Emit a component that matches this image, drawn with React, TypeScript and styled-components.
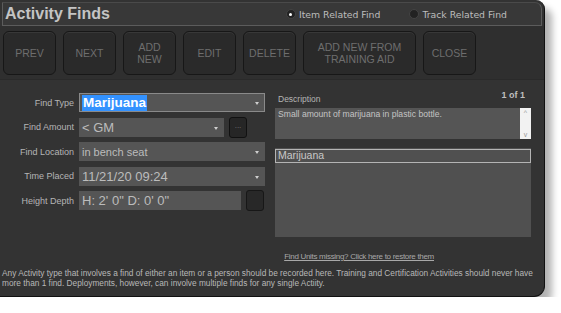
import React from 'react'
import styled, { createGlobalStyle } from 'styled-components'

const GlobalStyle = createGlobalStyle`
  html, body {
    margin: 0;
    padding: 0;
    background: #ffffff;
    font-family: 'Liberation Sans', Arial, sans-serif;
  }
`

const Window = styled.div`
  width: 544px;
  height: 296px;
  background: #333333;
  border-right: 1px solid #111;
  border-bottom: 1px solid #111;
  border-radius: 0 9px 11px 0;
  box-shadow: 7px 8px 7px rgba(0, 0, 0, 0.3);
  display: flex;
  flex-direction: column;
  overflow: hidden;
`

const Header = styled.div`
  margin: 2px 2px 0 2px;
  height: 22px;
  border: 1px solid #5c5c5c;
  border-top-color: #4a4a4a;
  border-radius: 0 7px 0 0;
  background: #383838;
  display: flex;
  align-items: center;
`

const Title = styled.h1`
  margin: 0 0 0 2px;
  font-size: 16px;
  font-weight: bold;
  color: #c4c4c4;
  flex: 1;
`

const RadioGroup = styled.div`
  display: flex;
  gap: 29px;
  margin-right: 34px;
`

const RadioOption = styled.label`
  display: flex;
  align-items: center;
  gap: 3px;
  color: #bdbdbd;
  font-family: 'DejaVu Sans', sans-serif;
  font-size: 9.3px;
`

const RadioDot = styled.span<{ $on?: boolean }>`
  width: 8px;
  height: 8px;
  border-radius: 50%;
  background: #222;
  border: 1px solid #444;
  display: flex;
  align-items: center;
  justify-content: center;
  &::after {
    content: '';
    width: 3px;
    height: 3px;
    border-radius: 50%;
    background: ${(p) => (p.$on ? '#fff' : 'transparent')};
  }
`

const ButtonBar = styled.div`
  display: flex;
  gap: 7px;
  padding: 5px 4px 4px 3px;
  background: #2f2f2f;
  border-bottom: 1px solid #2a2a2a;
`

const ToolButton = styled.button<{ $w?: number }>`
  width: ${(p) => p.$w || 53}px;
  height: 44px;
  background: #2a2a2a;
  border: 1px solid #171717;
  border-radius: 6px;
  box-shadow: inset 0 1px 0 #383838;
  color: #6e6e6e;
  font-family: 'Liberation Sans', Arial, sans-serif;
  font-size: 10.5px;
  line-height: 12px;
  text-transform: uppercase;
  padding: 0 4px;
`

const Main = styled.div`
  display: flex;
  flex-direction: column;
`

const Body = styled.div`
  display: flex;
  padding: 13px 0 0 0;
  gap: 10px;
`

const FormColumn = styled.div`
  width: 265px;
  display: flex;
  flex-direction: column;
  gap: 5.5px;
`

const Row = styled.div`
  display: flex;
  align-items: center;
  height: 19px;
`

const Label = styled.span`
  width: 74px;
  text-align: right;
  padding-right: 5px;
  font-size: 9px;
  color: #b5b5b5;
  flex-shrink: 0;
`

const Field = styled.div<{ $w: number; $border?: boolean; $size?: number }>`
  width: ${(p) => p.$w}px;
  height: 19px;
  box-sizing: border-box;
  background: #555555;
  border: 1px solid ${(p) => (p.$border ? '#8a8a8a' : '#555')};
  display: flex;
  align-items: center;
  padding-left: 2px;
  font-size: ${(p) => p.$size || 13}px;
  color: #bcbcbc;
  position: relative;
  white-space: nowrap;
`

const Selected = styled.span`
  background: #3392ff;
  color: #fff;
  font-weight: bold;
  font-size: 13.5px;
  line-height: 16px;
  padding: 0 1px;
`

const Caret = styled.span`
  position: absolute;
  right: 5px;
  top: 8px;
  width: 0;
  height: 0;
  border-left: 2.5px solid transparent;
  border-right: 2.5px solid transparent;
  border-top: 3px solid #cfcfcf;
`

const DotsButton = styled.div<{ $dim?: boolean }>`
  width: 18px;
  height: 21px;
  margin-left: 5px;
  box-sizing: border-box;
  background: #262626;
  border: 1px solid #111;
  border-radius: 3px;
  display: flex;
  align-items: center;
  justify-content: center;
  color: #777;
  font-size: 8px;
  padding-bottom: 3px;
  opacity: ${(p) => (p.$dim ? 0.8 : 1)};
`

const SideColumn = styled.div`
  width: 256px;
  display: flex;
  flex-direction: column;
`

const SideHead = styled.div`
  display: flex;
  justify-content: space-between;
  align-items: flex-end;
  height: 14px;
  padding: 0 6px 0 3px;
  margin-top: -3px;
`

const SmallLabel = styled.span`
  font-size: 8.5px;
  color: #b5b5b5;
`

const Counter = styled.span`
  font-size: 9px;
  font-weight: bold;
  color: #bfbfbf;
  align-self: flex-start;
`

const DescBox = styled.div`
  margin-top: 4px;
  height: 31px;
  background: #555555;
  display: flex;
  justify-content: space-between;
  font-size: 8.6px;
  color: #c4c4c4;
  padding: 1px 0 0 3px;
  box-sizing: border-box;
`

const ScrollBar = styled.div`
  width: 11px;
  background: #f2f2f2;
  display: flex;
  flex-direction: column;
  justify-content: space-between;
  align-items: center;
  font-size: 7px;
  color: #999;
  margin-top: -1px;
  padding: 1px 0;
`

const ListBox = styled.div`
  margin-top: 9px;
  height: 89px;
  background: #505050;
  padding: 1px 0;
  box-sizing: border-box;
`

const ListItem = styled.div`
  height: 12px;
  border: 1px solid #b4b4b4;
  font-size: 10.5px;
  line-height: 11px;
  color: #c8c8c8;
  padding-left: 2px;
`

const RestoreLink = styled.a`
  display: block;
  align-self: flex-end;
  margin: 15px 110px 0 0;
  font-size: 8px;
  letter-spacing: -0.3px;
  color: #a8a8a8;
  text-decoration: underline;
`

const Note = styled.p`
  margin: 7px 0 0 2px;
  font-size: 8.3px;
  line-height: 10px;
  color: #b8b8b8;
`

export default function App() {
  return (
    <>
      <GlobalStyle />
      <Window>
        <Header>
          <Title>Activity Finds</Title>
          <RadioGroup>
            <RadioOption>
              <RadioDot $on />
              Item Related Find
            </RadioOption>
            <RadioOption>
              <RadioDot />
              Track Related Find
            </RadioOption>
          </RadioGroup>
        </Header>
        <ButtonBar>
          <ToolButton>Prev</ToolButton>
          <ToolButton>Next</ToolButton>
          <ToolButton>
            Add
            <br />
            New
          </ToolButton>
          <ToolButton>Edit</ToolButton>
          <ToolButton>Delete</ToolButton>
          <ToolButton $w={113}>
            Add new from
            <br />
            Training Aid
          </ToolButton>
          <ToolButton>Close</ToolButton>
        </ButtonBar>
        <Main>
          <Body>
            <FormColumn>
              <Row>
                <Label>Find Type</Label>
                <Field $w={186} $border>
                  <Selected>Marijuana</Selected>
                  <Caret />
                </Field>
              </Row>
              <Row>
                <Label>Find Amount</Label>
                <Field $w={145} $size={13}>
                  &lt; GM
                  <Caret />
                </Field>
                <DotsButton>...</DotsButton>
              </Row>
              <Row>
                <Label>Find Location</Label>
                <Field $w={186} $size={11}>
                  in bench seat
                  <Caret />
                </Field>
              </Row>
              <Row>
                <Label>Time Placed</Label>
                <Field $w={186} $size={13}>
                  11/21/20 09:24
                  <Caret />
                </Field>
              </Row>
              <Row>
                <Label>Height Depth</Label>
                <Field $w={162} $size={13}>
                  H: 2' 0" D: 0' 0"
                </Field>
                <DotsButton $dim />
              </Row>
            </FormColumn>
            <SideColumn>
              <SideHead>
                <SmallLabel>Description</SmallLabel>
                <Counter>1 of 1</Counter>
              </SideHead>
              <DescBox>
                Small amount of marijuana in plastic bottle.
                <ScrollBar>
                  <span>^</span>
                  <span>v</span>
                </ScrollBar>
              </DescBox>
              <ListBox>
                <ListItem>Marijuana</ListItem>
              </ListBox>
            </SideColumn>
          </Body>
          <RestoreLink>Find Units missing? Click here to restore them</RestoreLink>
          <Note>
            Any Activity type that involves a find of either an item or a person should be
            recorded here. Training and Certification Activities should never have more than 1
            find. Deployments, however, can involve multiple finds for any single Actiity.
          </Note>
        </Main>
      </Window>
    </>
  )
}
